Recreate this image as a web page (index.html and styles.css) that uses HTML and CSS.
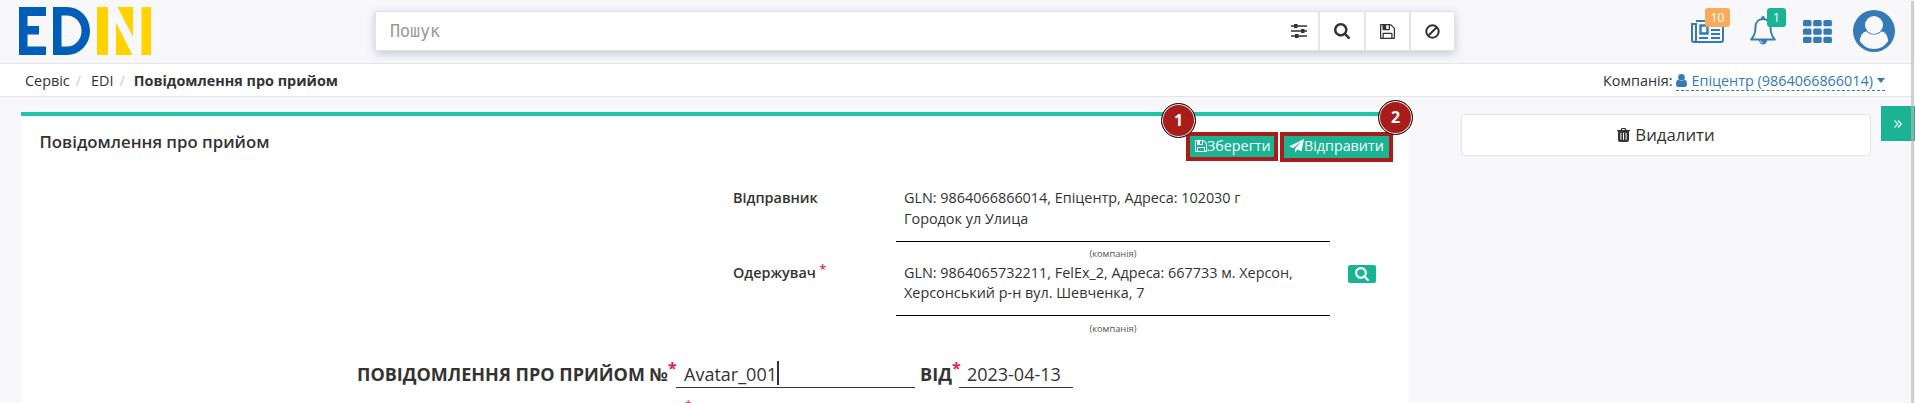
FILE: index.html
```
<!DOCTYPE html>
<html lang="uk">
<head>
<meta charset="utf-8">
<title>Повідомлення про прийом</title>
<link rel="stylesheet" href="styles.css">
</head>
<body>
<svg class="defs" width="0" height="0">
  <symbol id="search" viewBox="0 0 1664 1664"><path d="M1152 704q0-185-131.500-316.500T704 256 387.500 387.500 256 704t131.500 316.500T704 1152t316.500-131.500T1152 704zm512 832q0 52-38 90t-90 38q-54 0-90-38l-343-342q-179 124-399 124-143 0-273.500-55.500t-225-150-150-225T0 704t55.500-273.500 150-225 225-150T704 0t273.500 55.500 225 150 150 225T1408 704q0 220-124 399l343 343q37 37 37 90z"/></symbol>
  <symbol id="floppy" viewBox="0 0 1536 1536"><path d="M384 1408h768v-384H384v384zm896 0h128V512q0-14-10-38.500t-20-34.500l-281-281q-10-10-34-20t-39-10v416q0 40-28 68t-68 28H352q-40 0-68-28t-28-68V128H128v1280h128V992q0-40 28-68t68-28h832q40 0 68 28t28 68v416zM896 480V160q0-13-9.500-22.500T864 128H672q-13 0-22.500 9.500T640 160v320q0 13 9.500 22.500T672 512h192q13 0 22.500-9.500T896 480zm640 32v928q0 40-28 68t-68 28H96q-40 0-68-28t-28-68V96q0-40 28-68T96 0h928q40 0 88 20t76 48l280 280q28 28 48 76t20 88z"/></symbol>
</svg>
<div class="page">
  <header class="header">
    <svg class="logo" width="132" height="48" viewBox="0 0 132 48">
      <path fill="#005eb8" d="M0 0h27v9H8.500v10H20v8.500H8.500V39.500H27V48H0zM34 0h14a23 24 0 0 1 0 48H34zM42.500 8.500v31h5.500a14.500 15.500 0 0 0 0-31z"/>
      <path fill="#ffd200" d="M78 0h11v48H78zM97 15.500L113.500 48H97zM98.500 0H114v30zM122.500 0H132v48h-9.500z"/>
    </svg>
    <div class="searchbar">
      <div class="field"><span class="placeholder">Пошук</span>
        <svg width="16" height="14" viewBox="0 0 16 14"><path stroke="#333" stroke-width="1.300" d="M0 2h16M0 7h16M0 12h16"/><path fill="#333" d="M3 0h3.500v4H3zM10 5h3.500v4H10zM4 10h3.500v4H4z"/></svg>
      </div>
      <div class="tool t1"><svg width="16" height="16"><use href="#search"/></svg></div>
      <div class="tool t2"><svg width="15" height="15"><use href="#floppy"/></svg></div>
      <div class="tool t3"><svg width="15" height="15" viewBox="0 0 15 15" fill="none" stroke="#333" stroke-width="2"><circle cx="7.500" cy="7.500" r="6.200"/><path d="M3.200 11.800l8.600-8.600"/></svg></div>
    </div>
    <div class="userbar">
      <div class="notice news">
        <svg width="33" height="23" viewBox="0 0 33 23" fill="none" stroke="#337ab7" stroke-width="2"><path d="M5 1h27v19q0 2-2 2H3q-2 0-2-2V4h4v15.500q0 2.500-2 2.500M5 3v17"/><path d="M9.500 5.500h7v8h-7z" stroke-width="2.400"/><path d="M20 6h9M20 10h9M20 14h9M8 18h9M20 18h9" stroke-width="1.800"/></svg>
        <span class="badge orange">10</span>
      </div>
      <div class="notice bell">
        <svg width="26" height="29" viewBox="0 0 26 29"><path fill="none" stroke="#337ab7" stroke-width="1.900" stroke-linejoin="round" d="M13 3c-5 0-7.500 3.500-7.500 8 0 6-1.500 9.500-4.300 12.500h23.600C22 20.500 20.500 17 20.500 11c0-4.500-2.500-8-7.500-8z"/><path fill="#337ab7" d="M11.300 1.800a1.700 1.700 0 0 1 3.400 0V4h-3.400zM9 24h8a4 4.500 0 0 1-8 0z"/><path stroke="#f8f8fb" fill="none" stroke-width=".8" d="M10.500 24.500a2.500 2.500 0 0 0 2.500 2.500"/></svg>
        <span class="badge green">1</span>
      </div>
      <svg class="grid" width="29" height="23" viewBox="0 0 29 23" fill="#337ab7"><rect width="8.500" height="6.300" rx="1.500"/><rect x="10.200" width="8.500" height="6.300" rx="1.500"/><rect x="20.400" width="8.500" height="6.300" rx="1.500"/><rect y="8.400" width="8.500" height="6.300" rx="1.500"/><rect x="10.200" y="8.400" width="8.500" height="6.300" rx="1.500"/><rect x="20.400" y="8.400" width="8.500" height="6.300" rx="1.500"/><rect y="16.700" width="8.500" height="6.300" rx="1.500"/><rect x="10.200" y="16.700" width="8.500" height="6.300" rx="1.500"/><rect x="20.400" y="16.700" width="8.500" height="6.300" rx="1.500"/></svg>
      <svg class="avatar" width="42" height="42" viewBox="0 0 42 42"><circle cx="21" cy="21" r="21" fill="#337ab7"/><path fill="#f8f8fb" d="M6.800 31C7.500 25 10 21.300 14.500 21.300c2 1.900 4 2.600 6.500 2.600s4.500-.7 6.500-2.600C32 21.300 34.500 25 35.200 31 32 36 27 39 21 39S10 36 6.800 31z"/><circle cx="21" cy="15" r="9.800" fill="#337ab7"/><circle cx="21" cy="15" r="9" fill="#f8f8fb"/></svg>
    </div>
  </header>
  <nav class="crumbs">
    <div class="path"><span>Сервіс</span><i class="s1">/</i><span>EDI</span><i class="s2">/</i><b>Повідомлення про прийом</b></div>
    <div class="company">Компанія: <span class="link"><svg width="11" height="13" viewBox="0 0 11 13" fill="#337ab7"><circle cx="5.500" cy="3.300" r="3.300"/><path d="M2.500 5.600q3 2.400 6 0Q11 6.200 11 10.600 11 13 9 13H2Q0 13 0 10.600 0 6.200 2.500 5.600z"/></svg><span class="name">Епіцентр (9864066866014)</span><svg width="8" height="5" viewBox="0 0 8 5"><path fill="#337ab7" d="M0 0h8L4 5z"/></svg></span></div>
  </nav>
  <div class="body">
    <main class="card">
      <div class="cardhead">
        <h1>Повідомлення про прийом</h1>
        <div class="actions">
          <div class="action save"><svg width="12" height="12" fill="#fff"><use href="#floppy"/></svg>Зберегти<span class="mark">1</span></div>
          <div class="action send"><svg width="15" height="14" viewBox="0 0 15 14" fill="#fff"><path d="M15 0l-2.400 12.300-4.400-1.700L6 14v-4.200L12.500 2.300 4.400 9 0 7.500z"/></svg>Відправити<span class="mark">2</span></div>
        </div>
      </div>
      <section class="party sender">
        <div class="label">Відправник</div>
        <div class="value"><div class="text">GLN: 9864066866014, Епіцентр, Адреса: 102030 г<br>Городок ул Улица</div><small>(компанія)</small></div>
      </section>
      <section class="party receiver">
        <div class="label">Одержувач <em>*</em></div>
        <div class="value"><div class="text">GLN: 9864065732211, FelEx_2, Адреса: 667733 м. Херсон,<br>Херсонський р-н вул. Шевченка, 7</div><small>(компанія)</small></div>
        <div class="lookup"><svg width="14" height="14" fill="#fff"><use href="#search"/></svg></div>
      </section>
      <section class="docline">
        <b class="doc">ПОВІДОМЛЕННЯ ПРО ПРИЙОМ №</b><em>*</em>
        <div class="input number">Avatar_001<span class="caret"></span></div>
        <b class="from">ВІД</b><em>*</em>
        <div class="input date">2023-04-13</div>
      </section>
      <div class="nextline"><em>*</em></div>
    </main>
    <aside class="side">
      <div class="delete"><svg width="13" height="14" viewBox="0 0 13 14"><path fill="#333" fill-rule="evenodd" d="M0 2h3.500L4.500 0h4l1 2H13v1.300h-1V12q0 2-2 2H3q-2 0-2-2V3.300H0zM5 2h3l-.4-.9H5.400zM3.400 4.800v7h1v-7zm2.600 0v7h1v-7zm2.600 0v7h1v-7z"/></svg>Видалити</div>
    </aside>
    <div class="expand"><svg width="8" height="8" viewBox="0 0 8 8" fill="none" stroke="#fff" stroke-width="1.100"><path d="M.5.5L4 4 .5 7.500M4 .5L7.500 4 4 7.500"/></svg></div>
  </div>
  <div class="scroll"></div>
</div>
</body>
</html>
```
FILE: styles.css
```
* { box-sizing: border-box; }
body { margin: 0; background: #f8f8fb; color: #333; font: 14.4px/20px "Open Sans", sans-serif; overflow: hidden; }
svg { display: block; flex: none; }
em { font-style: normal; color: #ed1c4c; }
.defs { position: absolute; }
.page { position: relative; width: 1915px; height: 403px; overflow: hidden; }
.header { display: flex; height: 64px; border-bottom: 1px solid #e4e5e9; }
.logo { margin: 7px 0 0 19px; }
.searchbar { display: flex; width: 1080px; height: 40px; margin: 11px 0 0 224px; border: 1px solid #e2e3e9; background: #fff; box-shadow: 0 3px 9px rgba(80, 85, 130, .3); }
.field { display: flex; align-items: center; justify-content: space-between; width: 942px; padding: 0 11px 0 14px; }
.placeholder { font-family: "DejaVu Sans Mono", monospace; font-size: 17px; line-height: 38px; color: #999; transform: scaleX(.98); transform-origin: left; }
.tool { display: flex; align-items: center; justify-content: center; border-left: 2px solid #e4e5e7; fill: #333; }
.t1 { width: 46px; }
.t2 { width: 45px; }
.t3 { width: 45px; }
.userbar { display: flex; margin-left: 236px; }
.notice { position: relative; }
.news { margin-top: 20px; }
.bell { margin: 16px 0 0 26px; }
.badge { position: absolute; height: 19px; border-radius: 3px; color: #fff; font-size: 12px; line-height: 19px; text-align: center; }
.orange { left: 14px; top: -12px; width: 25px; background: #f8ac59; }
.green { left: 17px; top: -8px; width: 19px; background: #1ab394; }
.grid { margin: 20px 0 0 27px; }
.avatar { margin: 10px 0 0 21px; }
.crumbs { display: flex; justify-content: space-between; height: 33px; padding: 0 30px 0 25px; background: #fff; border-bottom: 1px solid #e4e5e9; line-height: 34px; }
.path { display: flex; }
.path i { font-style: normal; color: #ccc; }
.s1 { margin: 0 10px 0 6px; }
.s2 { margin: 0 9px 0 6px; }
.company { display: flex; gap: 4px; }
.link { display: flex; align-items: center; gap: 4px; height: 27px; line-height: 34px; color: #337ab7; border-bottom: 1px dashed #337ab7; }
.link svg { margin-top: 6px; }
.name { height: 34px; margin-top: 7px; }
.body { display: flex; height: 306px; }
.card { width: 1388px; height: 300px; margin: 15px 0 0 21px; border-top: 4px solid #1fc5a4; background: #fff; }
.cardhead { display: flex; justify-content: space-between; padding: 16px 16px 0 18.5px; height: 62px; }
h1 { margin: 0; font-size: 16.8px; line-height: 20px; font-weight: 600; }
.actions { display: flex; align-items: flex-start; gap: 2px; font-size: 14.3px; }
.action { position: relative; display: flex; align-items: center; border: 4px solid #a81c19; background: #1ab394; color: #fff; }
.save { width: 92px; height: 29px; padding: 0 0 1px 5px; }
.send { width: 113px; height: 30px; padding: 0 0 2px 5px; }
.mark { position: absolute; width: 35px; height: 35px; border: 1px solid #111; border-radius: 50%; background: #a81c19; box-shadow: inset 0 0 0 1px #eee; font-weight: 700; font-size: 16px; line-height: 33px; text-align: center; }
.save .mark { left: -29px; top: -33px; }
.send .mark { left: 94px; top: -36px; }
.party { display: flex; margin-left: 712px; }
.sender { height: 75px; padding-top: 9px; }
.sender .label { line-height: 21px; }
.receiver { height: 90px; padding-top: 10px; }
.label { width: 163px; font-weight: 600; }
.label em { font-size: 12px; position: relative; top: -4px; }
.value { width: 434px; text-align: center; }
.text { height: 55px; padding-left: 8px; border-bottom: 1px solid #000; text-align: left; white-space: nowrap; }
.sender .text { line-height: 21px; }
.receiver .text { line-height: 20px; height: 53px; }
small { display: block; margin-top: 2px; font-size: 9.300px; line-height: 19px; color: #555; }
.receiver small { margin-top: 3px; }
.lookup { display: flex; align-items: center; justify-content: center; width: 28px; height: 18px; margin: 2px 0 0 18px; border-radius: 2px; background: #1ab394; }
.docline { display: flex; height: 54px; padding: 17px 0 9px 336px; font-size: 18px; line-height: 28px; white-space: nowrap; }
.docline em { width: 7px; font-size: 16px; font-weight: 700; line-height: 17px; }
.input { border-bottom: 1px solid #333; padding-left: 8px; }
.number { display: flex; width: 239px; margin-left: 1px; }
.caret { width: 2px; height: 24px; margin-top: 1px; background: #333; }
.from { margin-left: 5px; }
.date { width: 114px; }
.nextline { padding-left: 664px; font-size: 12px; line-height: 18px; }
.side { margin: 17px 0 0 52px; width: 410px; }
.delete { display: flex; align-items: center; justify-content: center; gap: 5px; height: 42px; border: 1px solid #e4e5e9; border-radius: 3px; background: #fff; font-size: 16.8px; }
.expand { display: flex; align-items: center; justify-content: center; width: 34px; height: 35px; margin: 9px 0 0 10px; background: #1ab394; }
.scroll { position: absolute; right: 1px; top: 1px; width: 3px; height: 402px; background: rgba(185, 185, 185, .65); }
```
